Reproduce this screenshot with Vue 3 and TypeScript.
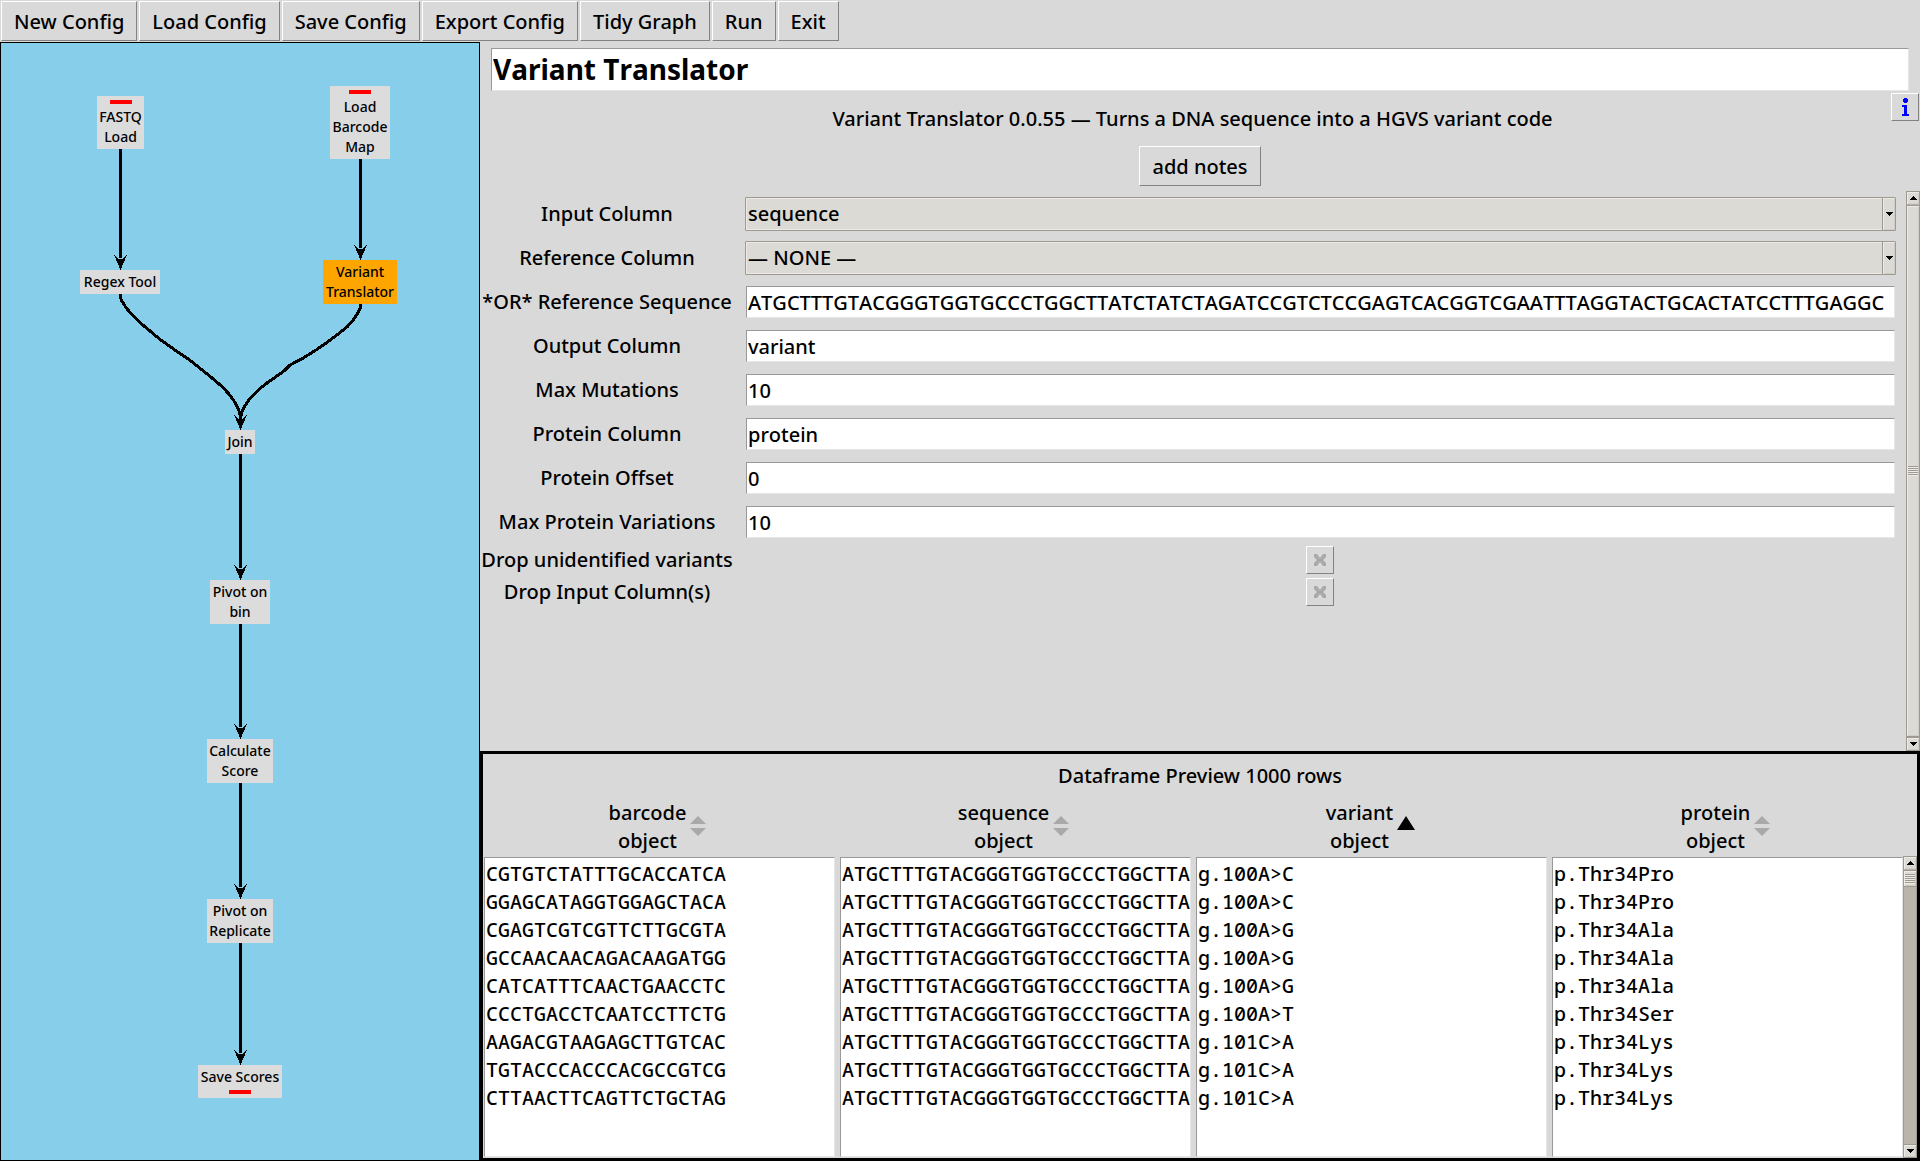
<script setup lang="ts">
import { ref } from 'vue'

interface GraphNode {
  lines: string[]
  x: number
  y: number
  width: number
  bar?: 'top' | 'bottom'
  active?: boolean
}

interface Field {
  id: string
  label: string
  value: string
  kind: 'select' | 'text'
}

const toolbar = ['New Config', 'Load Config', 'Save Config', 'Export Config', 'Tidy Graph', 'Run', 'Exit']

// Node coordinates are relative to the graph canvas
const nodes: GraphNode[] = [
  { lines: ['FASTQ', 'Load'], x: 96, y: 53, width: 47, bar: 'top' },
  { lines: ['Load', 'Barcode', 'Map'], x: 329, y: 43, width: 60, bar: 'top' },
  { lines: ['Regex Tool'], x: 79, y: 227, width: 80 },
  { lines: ['Variant', 'Translator'], x: 322, y: 217, width: 74, active: true },
  { lines: ['Join'], x: 224, y: 387, width: 30 },
  { lines: ['Pivot on', 'bin'], x: 209, y: 537, width: 60 },
  { lines: ['Calculate', 'Score'], x: 206, y: 696, width: 66 },
  { lines: ['Pivot on', 'Replicate'], x: 206, y: 856, width: 66 },
  { lines: ['Save Scores'], x: 197, y: 1022, width: 84, bar: 'bottom' },
]

const edges = [
  'M119.5 106V215',
  'M359.5 116V205',
  'M119.5 251V255C124 266 134 276 149 288C162 300 176 308 190 318L211 335C226 347 239 362 239.5 376',
  'M359.5 261V265C354 276 347 284 341 288C326 300 310 312 289 322L283 328L266 340C252 350 240 364 239.5 376',
  'M239.5 411V525',
  'M239.5 581V684',
  'M239.5 740V844',
  'M239.5 900V1010',
]

const arrows = [
  [119.5, 227],
  [359.5, 217],
  [239.5, 387],
  [239.5, 537],
  [239.5, 696],
  [239.5, 856],
  [239.5, 1022],
]

const title = ref('Variant Translator')

const fields = ref<Field[]>([
  { id: 'input-column', label: 'Input Column', value: 'sequence', kind: 'select' },
  { id: 'reference-column', label: 'Reference Column', value: '— NONE —', kind: 'select' },
  {
    id: 'reference-sequence',
    label: '*OR* Reference Sequence',
    value: 'ATGCTTTGTACGGGTGGTGCCCTGGCTTATCTATCTAGATCCGTCTCCGAGTCACGGTCGAATTTAGGTACTGCACTATCCTTTGAGGC',
    kind: 'text',
  },
  { id: 'output-column', label: 'Output Column', value: 'variant', kind: 'text' },
  { id: 'max-mutations', label: 'Max Mutations', value: '10', kind: 'text' },
  { id: 'protein-column', label: 'Protein Column', value: 'protein', kind: 'text' },
  { id: 'protein-offset', label: 'Protein Offset', value: '0', kind: 'text' },
  { id: 'max-protein-variations', label: 'Max Protein Variations', value: '10', kind: 'text' },
])

const toggles = ref([
  { id: 'drop-unidentified', label: 'Drop unidentified variants', checked: false },
  { id: 'drop-input', label: 'Drop Input Column(s)', checked: false },
])

const columns = ['barcode', 'sequence', 'variant', 'protein']
const sortedColumn = 'variant'

const sequence = 'ATGCTTTGTACGGGTGGTGCCCTGGCTTA'
const rows = [
  ['CGTGTCTATTTGCACCATCA', sequence, 'g.100A>C', 'p.Thr34Pro'],
  ['GGAGCATAGGTGGAGCTACA', sequence, 'g.100A>C', 'p.Thr34Pro'],
  ['CGAGTCGTCGTTCTTGCGTA', sequence, 'g.100A>G', 'p.Thr34Ala'],
  ['GCCAACAACAGACAAGATGG', sequence, 'g.100A>G', 'p.Thr34Ala'],
  ['CATCATTTCAACTGAACCTC', sequence, 'g.100A>G', 'p.Thr34Ala'],
  ['CCCTGACCTCAATCCTTCTG', sequence, 'g.100A>T', 'p.Thr34Ser'],
  ['AAGACGTAAGAGCTTGTCAC', sequence, 'g.101C>A', 'p.Thr34Lys'],
  ['TGTACCCACCCACGCCGTCG', sequence, 'g.101C>A', 'p.Thr34Lys'],
  ['CTTAACTTCAGTTCTGCTAG', sequence, 'g.101C>A', 'p.Thr34Lys'],
]
</script>

<template>
  <div class="app">
    <nav class="toolbar">
      <button v-for="item in toolbar" :key="item" type="button" class="raised">{{ item }}</button>
    </nav>

    <div class="workspace">
      <section class="graph" aria-label="Pipeline graph">
        <svg class="edges" aria-hidden="true">
          <path v-for="d in edges" :key="d" :d="d" class="edge" />
          <path
            v-for="[x, y] in arrows"
            :key="`${x}-${y}`"
            :d="`M${x} ${y}L${x - 6.5} ${y - 15}L${x - 1.5} ${y - 11}H${x + 1.5}L${x + 6.5} ${y - 15}Z`"
          />
        </svg>
        <div
          v-for="node in nodes"
          :key="node.lines.join(' ')"
          class="node"
          :class="{ active: node.active }"
          :style="{ left: `${node.x}px`, top: `${node.y}px`, width: `${node.width}px` }"
        >
          <span v-if="node.bar === 'top'" class="bar bar-top"></span>
          <span v-for="line in node.lines" :key="line" class="node-line">{{ line }}</span>
          <span v-if="node.bar === 'bottom'" class="bar bar-bottom"></span>
        </div>
      </section>

      <main class="detail">
        <header class="heading">
          <input v-model="title" class="entry title" type="text" aria-label="Step name" />
        </header>
        <div class="about">
          <p class="description">Variant Translator 0.0.55 — Turns a DNA sequence into a HGVS variant code</p>
          <button type="button" class="raised info" aria-label="Information">
            <svg width="28" height="28" viewBox="0 0 28 28" aria-hidden="true">
              <path
                fill="#00f"
                d="M13 5h3v1h1v3h-1v1h-3v-1h-1V6h1zM11 12h5v9h2v2h-7v-2h2v-7h-2z"
              />
            </svg>
          </button>
        </div>
        <div class="notes">
          <button type="button" class="raised">add notes</button>
        </div>

        <div class="settings">
          <form class="form" @submit.prevent>
            <div v-for="field in fields" :key="field.id" class="row">
              <label :for="field.id">{{ field.label }}</label>
              <div v-if="field.kind === 'select'" class="combo">
                <select :id="field.id" v-model="field.value">
                  <option>{{ field.value }}</option>
                </select>
                <span class="combo-arrow">
                  <svg width="7" height="4" viewBox="0 0 7 4" aria-hidden="true">
                    <path d="M0 0h7v1H6v1H5v1H4v1H3V3H2V2H1V1H0z" />
                  </svg>
                </span>
              </div>
              <input v-else :id="field.id" v-model="field.value" class="entry" type="text" />
            </div>
            <div v-for="toggle in toggles" :key="toggle.id" class="row toggle-row">
              <label :for="toggle.id">{{ toggle.label }}</label>
              <span class="toggle">
                <input :id="toggle.id" v-model="toggle.checked" type="checkbox" class="raised" />
                <svg width="28" height="28" viewBox="0 0 28 28" aria-hidden="true">
                  <path d="M8 8h3l3 4 3-4h3v3l-3 3 3 3v3h-3l-3-4-3 4H8v-3l3-3-3-3z" fill="#a9a9a9" />
                </svg>
              </span>
            </div>
          </form>
          <div class="scrollbar">
            <button type="button" aria-label="Scroll up">
              <svg width="7" height="4" viewBox="0 0 7 4" aria-hidden="true">
                <path d="M3 0h1v1h1v1h1v1h1v1H0V3h1V2h1V1h1z" />
              </svg>
            </button>
            <div class="trough"><div class="thumb thumb-full"><span class="grip"></span></div></div>
            <button type="button" aria-label="Scroll down">
              <svg width="7" height="4" viewBox="0 0 7 4" aria-hidden="true">
                <path d="M0 0h7v1H6v1H5v1H4v1H3V3H2V2H1V1H0z" />
              </svg>
            </button>
          </div>
        </div>

        <section class="preview">
          <h2>Dataframe Preview 1000 rows</h2>
          <div class="preview-body">
            <table>
              <thead>
                <tr>
                  <th v-for="column in columns" :key="column" scope="col">
                    <button type="button" class="sort">
                      <span class="sort-text">{{ column }}<br />object</span>
                      <svg v-if="column === sortedColumn" width="20" height="22" viewBox="0 0 20 22" aria-hidden="true">
                        <path d="M9 0L18 14H0z" />
                      </svg>
                      <svg v-else width="20" height="22" viewBox="0 0 20 22" aria-hidden="true">
                        <path fill="#a9a9a9" d="M8 0L16 8H0zM0 12H16L8 20z" />
                      </svg>
                    </button>
                  </th>
                </tr>
              </thead>
              <tbody>
                <tr v-for="(row, index) in rows" :key="index">
                  <td v-for="(cell, c) in row" :key="c">{{ cell }}</td>
                </tr>
                <tr class="filler" aria-hidden="true">
                  <td v-for="column in columns" :key="column"></td>
                </tr>
              </tbody>
            </table>
            <div class="scrollbar list-scrollbar">
              <button type="button" aria-label="Scroll up">
                <svg width="7" height="4" viewBox="0 0 7 4" aria-hidden="true">
                  <path d="M3 0h1v1h1v1h1v1h1v1H0V3h1V2h1V1h1z" />
                </svg>
              </button>
              <div class="trough"><div class="thumb thumb-short"><span class="grip"></span></div></div>
              <button type="button" aria-label="Scroll down">
                <svg width="7" height="4" viewBox="0 0 7 4" aria-hidden="true">
                  <path d="M0 0h7v1H6v1H5v1H4v1H3V3H2V2H1V1H0z" />
                </svg>
              </button>
            </div>
          </div>
        </section>
      </main>
    </div>
  </div>
</template>

<style>
body {
  margin: 0;
  background: #d9d9d9;
}
</style>

<style scoped>
.app {
  display: flex;
  flex-direction: column;
  min-height: 100vh;
  background: #d9d9d9;
  color: #000;
  font: 500 20px/28px 'Noto Sans', sans-serif;
}

.app *,
.app *::before {
  box-sizing: border-box;
}

button,
input,
select {
  margin: 0;
  font: inherit;
  color: inherit;
  border-radius: 0;
}

svg {
  display: block;
}

.raised {
  padding: 6px 12px 4px;
  background: #d9d9d9;
  border: 1px solid;
  border-color: #fff #828282 #828282 #fff;
}

.toolbar {
  display: flex;
  flex-wrap: wrap;
  gap: 2px;
  padding: 1px;
}

.workspace {
  flex: 1;
  display: grid;
  grid-template-columns: 25% minmax(0, 1fr);
}

/* Pipeline graph */
.graph {
  position: relative;
  min-height: 1100px;
  background: #87ceeb;
  border: 1px solid #000;
}

.edges {
  position: absolute;
  inset: 0;
  width: 100%;
  height: 100%;
  shape-rendering: crispEdges;
}

.edge {
  fill: none;
  stroke: #000;
  stroke-width: 3;
}

.node {
  position: absolute;
  display: flex;
  flex-direction: column;
  align-items: center;
  padding: 2px 0;
  background: #dcdcdc;
  font-size: 14px;
  line-height: 20px;
}

.node.active {
  background: #ffa500;
}

.node-line {
  white-space: nowrap;
}

.bar {
  width: 22px;
  height: 4px;
  background: #f00;
}

.bar-top {
  margin: 2px 0 3px;
}

.bar-bottom {
  margin: 3px 0 2px;
}

/* Detail pane */
.detail {
  display: flex;
  flex-direction: column;
  min-width: 0;
}

.entry {
  width: 100%;
  height: 32px;
  padding: 0 1px;
  background: #fff;
  border: 1px solid;
  border-color: #999 #e6e6e6 #e6e6e6 #999;
  outline: none;
  font-kerning: none;
}

.heading {
  display: flex;
  padding: 6px 11px 2px;
}

.title {
  height: 43px;
  padding-bottom: 2px;
  font-size: 28px;
  font-weight: 700;
}

.about {
  display: flex;
  align-items: flex-start;
  padding: 0 1px 0 14px;
}

.description {
  flex: 1;
  margin: 0;
  padding: 12px 0;
  text-align: center;
}

.info {
  display: grid;
  width: 28px;
  height: 28px;
  padding: 0;
}

.info svg {
  margin: -1px;
}

.notes {
  display: flex;
  justify-content: center;
  padding: 1px 0 5px;
}

.settings {
  flex: 1;
  display: flex;
}

.form {
  flex: 1;
  display: flex;
  flex-direction: column;
  padding-top: 1px;
  min-width: 0;
}

.row {
  display: grid;
  grid-template-columns: 254px minmax(0, 1fr);
  column-gap: 12px;
  align-items: center;
  height: 44px;
  padding-right: 11px;
}

.row label {
  text-align: center;
  white-space: nowrap;
}

.toggle-row {
  height: 32px;
}

.toggle {
  display: grid;
  justify-content: center;
  padding-right: 1px;
}

.toggle > * {
  grid-area: 1 / 1;
}

.toggle input {
  appearance: none;
  width: 28px;
  height: 28px;
  padding: 0;
}

.toggle svg {
  pointer-events: none;
}

.combo {
  display: grid;
  margin: 0 -1px;
}

.combo > * {
  grid-area: 1 / 1;
}

.combo select {
  appearance: none;
  width: 100%;
  height: 34px;
  padding: 0 16px 0 2px;
  background: #dcdad5;
  border: 1px solid #9e9a91;
  border-radius: 1px;
  box-shadow: inset 0 0 0 1px #eeebe7;
  outline: none;
}

.combo-arrow {
  display: grid;
  place-items: center;
  justify-self: end;
  width: 14px;
  margin: 1px 0;
  border: solid #9e9a91;
  border-width: 0 1px;
  box-shadow: inset 1px 1px #eeebe7, inset -1px -1px #cfcdc8;
  pointer-events: none;
}

/* Scrollbars */
.scrollbar {
  display: flex;
  flex-direction: column;
  flex: none;
  width: 14px;
}

.scrollbar button,
.thumb {
  display: grid;
  place-items: center;
  width: 14px;
  padding: 0;
  background: #dcdad5;
  border: 1px solid #9e9a91;
  box-shadow: inset 1px 1px #eeebe7, inset -1px -1px #cfcdc8;
}

.scrollbar button {
  height: 14px;
}

.trough {
  flex: 1;
  background: #bab5ab;
  border: solid #9e9a91;
  border-width: 0 1px;
  margin: -1px 0;
  padding: 1px 0;
  display: flex;
  flex-direction: column;
  align-items: center;
}

.thumb-full {
  flex: 1;
}

.thumb-short {
  height: 17px;
}

.grip {
  width: 10px;
  height: 10px;
  background: repeating-linear-gradient(#9e9a91 0 1px, #eeebe7 1px 2px);
}

/* Dataframe preview */
.preview {
  display: flex;
  flex-direction: column;
  border: 3px solid #000;
}

.preview h2 {
  margin: 0;
  padding: 8px 0 9px;
  font: inherit;
  text-align: center;
}

.preview-body {
  display: flex;
  padding: 0 0 1px 1px;
}

table {
  flex: 1;
  display: flex;
  flex-direction: column;
  min-width: 0;
}

tbody {
  display: flex;
  flex-direction: column;
  height: 300px;
}

tr {
  display: grid;
  grid-template-columns: repeat(4, minmax(0, 1fr));
  column-gap: 5px;
}

th {
  display: flex;
  justify-content: center;
  height: 58px;
  padding: 0;
  font-weight: inherit;
}

.sort {
  display: flex;
  align-items: center;
  gap: 4px;
  height: 56px;
  padding: 0;
  background: none;
  border: 0;
}

td {
  height: 28px;
  padding: 0 1px;
  overflow: hidden;
  background: #fff;
  border: solid;
  border-width: 0 1px;
  border-color: #999 #e6e6e6 #e6e6e6 #999;
  font-family: 'Noto Sans Mono', 'DejaVu Sans Mono', monospace;
  white-space: nowrap;
}

tbody tr:first-child td {
  height: 31px;
  padding-top: 2px;
  border-top-width: 1px;
}

.filler {
  flex: 1;
}

.filler td {
  height: auto;
  border-bottom-width: 1px;
}

.list-scrollbar {
  margin: 57px 0 -1px;
}
</style>
